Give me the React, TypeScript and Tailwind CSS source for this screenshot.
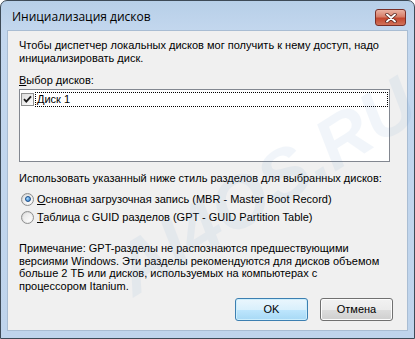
import React from "react";

const body = "font-['Liberation_Sans',Arial,sans-serif] text-[11px] leading-[13px] text-black";

function Radio({ checked }: { checked?: boolean }) {
  return (
    <span className="flex h-[13px] w-[13px] shrink-0 items-center justify-center rounded-full border border-[#8e8f8f] bg-[linear-gradient(135deg,#d0d0d0,#f8f8f8)]">
      <span className="flex h-[9px] w-[9px] items-center justify-center rounded-full bg-[linear-gradient(135deg,#e4e4e4,#ffffff)]">
        {checked && (
          <span className="h-[6px] w-[6px] rounded-full border border-[#1b4e8a] bg-[radial-gradient(circle_at_35%_35%,#a8dcff,#2a74c4)]" />
        )}
      </span>
    </span>
  );
}

function Check() {
  return (
    <span className="flex h-[13px] w-[13px] shrink-0 items-center justify-center border border-[#8e8f8f] bg-[linear-gradient(135deg,#dcdcdc,#ffffff)]">
      <svg width="9" height="9" viewBox="0 0 9 9">
        <path d="M1 4.2 L3.3 6.6 L8 1.4" fill="none" stroke="#1a1a1a" strokeWidth="1.8" />
      </svg>
    </span>
  );
}

function WinButton({ label, primary }: { label: string; primary?: boolean }) {
  return (
    <div
      className={`flex h-[23px] w-[73px] items-center justify-center rounded-[3px] border ${
        primary
          ? "border-[#3c7fb1] bg-[linear-gradient(#eaf6fd_0%,#d9f0fc_50%,#bee6fd_51%,#a7d9f5_100%)] shadow-[inset_0_0_0_1px_#cdeefc]"
          : "border-[#707070] bg-[linear-gradient(#f2f2f2_0%,#ebebeb_50%,#dddddd_51%,#cfcfcf_100%)] shadow-[inset_0_0_0_1px_#fcfcfc]"
      }`}
    >
      <span className={body}>{label}</span>
    </div>
  );
}

export default function App() {
  return (
    <div className="relative h-[339px] w-[415px] overflow-hidden bg-white">
      <div className="flex h-full w-full flex-col rounded-t-[7px] border border-[#3d4a57] bg-[linear-gradient(180deg,#b7cfe8_0%,#c3d7ee_30px,#bfd4ec_100%)]">
        {/* Title bar */}
        <div className="flex h-[29px] shrink-0 items-center justify-between pl-[11px] pr-[8px]">
          <span className="mt-[2px] font-['Open_Sans','Noto_Sans',sans-serif] text-[12px] text-black">
            Инициализация дисков
          </span>
          <div className="mt-[4px] flex h-[17px] w-[31px] items-center justify-center rounded-[3px] border border-[#7a2f27] bg-[linear-gradient(#eab1a2_0%,#d77e69_45%,#c3472f_55%,#d0735b_100%)]">
            <svg width="12" height="10" viewBox="0 0 12 10">
              <path d="M2 1.5 L10 8.5 M10 1.5 L2 8.5" stroke="#4a1a14" strokeWidth="3.4" strokeLinecap="round" />
              <path d="M2 1.5 L10 8.5 M10 1.5 L2 8.5" stroke="#ffffff" strokeWidth="1.9" strokeLinecap="round" />
            </svg>
          </div>
        </div>

        {/* Client area */}
        <div className={`mx-[6px] flex h-[301px] flex-col border border-[#a9bdd3] bg-[#f0f0f0] pl-[11px] pr-[13px] pt-[8px] pb-[9px] ${body}`}>
          <p>
            Чтобы диспетчер локальных дисков мог получить к нему доступ, надо
            <br />
            инициализировать диск.
          </p>
          <p className="mt-[9px]">
            <span className="underline">В</span>ыбор дисков:
          </p>
          <div className="mt-[2px] h-[73px] w-[371px] border border-[#828790] bg-white px-[1px] pt-[2px]">
            <div className="flex h-[15px] items-center">
              <Check />
              <div className="ml-[1px] flex h-[15px] flex-1 items-center border border-dotted border-black pl-[1px]">
                Диск 1
              </div>
            </div>
          </div>
          <p className="mt-[10px]">
            Использовать указанный ниже стиль разделов для выбранных дисков:
          </p>
          <div className="mt-[6px] flex flex-col gap-[2px] pl-[2px]">
            <div className="flex h-[16px] items-center gap-[3px]">
              <Radio checked />
              <span>
                <span className="underline">О</span>сновная загрузочная запись (MBR - Master Boot Record)
              </span>
            </div>
            <div className="flex h-[16px] items-center gap-[3px]">
              <Radio />
              <span>
                <span className="underline">Т</span>аблица с GUID разделов (GPT - GUID Partition Table)
              </span>
            </div>
          </div>
          <p className="mt-[17px] leading-[12.7px]">
            Примечание: GPT-разделы не распознаются предшествующими
            <br />
            версиями Windows. Эти разделы рекомендуются для дисков объемом
            <br />
            больше 2 ТБ или дисков, используемых на компьютерах с
            <br />
            процессором Itanium.
          </p>
          <div className="mt-auto flex justify-end gap-[12px] pr-[1px]">
            <WinButton label="OK" primary />
            <WinButton label="Отмена" />
          </div>
        </div>
      </div>

      {/* watermark */}
      <span className="pointer-events-none absolute left-[95px] top-[150px] -rotate-[32deg] font-['Liberation_Sans',Arial,sans-serif] text-[72px] font-bold italic leading-none text-[#5b8fc8] opacity-[0.08]">
        AI4OS.RU
      </span>
    </div>
  );
}
